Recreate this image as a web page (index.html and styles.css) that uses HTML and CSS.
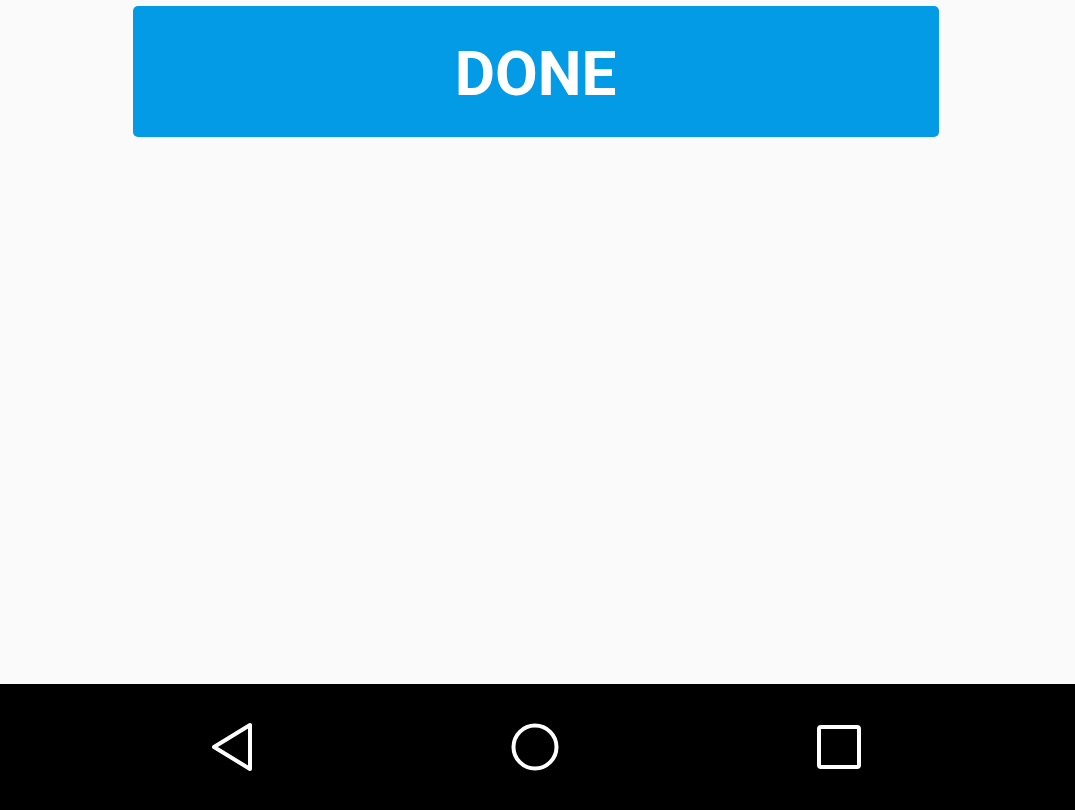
FILE: index.html
```html
<!DOCTYPE html>
<html>
<head>
<meta charset="utf-8">
<link rel="stylesheet" href="styles.css">
</head>
<body>
<div class="screen">
  <main class="content">
    <button class="done">DONE</button>
  </main>
  <nav class="navbar">
    <svg class="nav-icon" width="60" height="60" viewBox="0 0 60 60"><path d="M49 8 L49 52 L13 30 Z" fill="none" stroke="#fff" stroke-width="4" stroke-linejoin="round"/></svg>
    <svg class="nav-icon" width="60" height="60" viewBox="0 0 60 60"><circle cx="30" cy="30" r="21.5" fill="none" stroke="#fff" stroke-width="4"/></svg>
    <svg class="nav-icon" width="60" height="60" viewBox="0 0 60 60"><rect x="10" y="10" width="40" height="40" rx="2" fill="none" stroke="#fff" stroke-width="4"/></svg>
  </nav>
</div>
</body>
</html>
```
FILE: styles.css
```css
html, body {
  margin: 0;
  padding: 0;
}
body {
  width: 1075px;
  height: 810px;
  overflow: hidden;
  background: #fafafa;
  font-family: Roboto, "Liberation Sans", sans-serif;
}
.screen {
  display: flex;
  flex-direction: column;
  height: 810px;
}
.content {
  flex: 1;
  display: flex;
  justify-content: center;
  align-items: flex-start;
  padding-top: 6px;
}
.done {
  width: 806px;
  height: 131px;
  margin-left: -4px;
  border: none;
  border-radius: 5px;
  background: #039be5;
  color: #fff;
  font-family: Roboto, "Liberation Sans", sans-serif;
  font-weight: 700;
  font-size: 62px;
  letter-spacing: 0;
  padding: 0;
  padding-top: 4px;
}
.navbar {
  height: 126px;
  background: #000;
  display: flex;
  align-items: center;
}
.nav-icon {
  display: block;
}
.nav-icon:nth-child(1) { margin-left: 201px; }
.nav-icon:nth-child(2) { margin-left: 244px; }
.nav-icon:nth-child(3) { margin-left: 244px; }
```
